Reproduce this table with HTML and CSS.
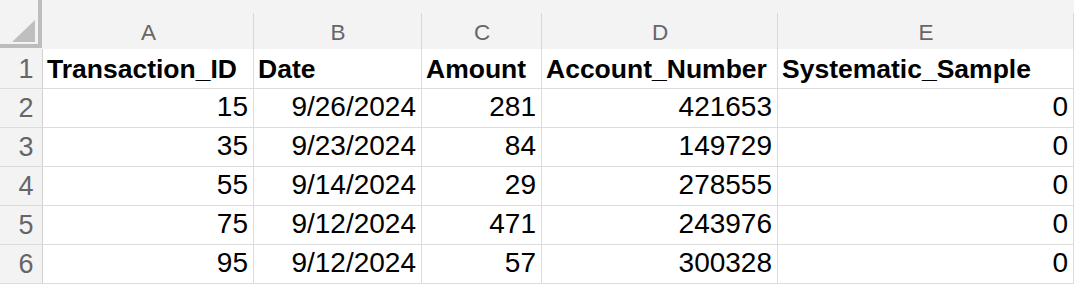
FILE: index.html
```html
<!DOCTYPE html>
<html>
<head>
<meta charset="utf-8">
<link rel="stylesheet" href="styles.css">
</head>
<body>
<div class="sheet">
  <div class="corner">
    <svg width="43" height="49" viewBox="0 0 43 49">
      <polygon points="12,42 35,42 35,20" fill="#bfbfbf"/>
      <rect x="38" y="0" width="4" height="48" fill="#bdbdbd"/>
      <rect x="0" y="44" width="42" height="4" fill="#bdbdbd"/>
    </svg>
  </div>
  <div class="colhead">A</div>
  <div class="colhead">B</div>
  <div class="colhead">C</div>
  <div class="colhead">D</div>
  <div class="colhead">E</div>

  <div class="rowhead">1</div>
  <div class="cell hdr">Transaction_ID</div>
  <div class="cell hdr">Date</div>
  <div class="cell hdr">Amount</div>
  <div class="cell hdr">Account_Number</div>
  <div class="cell hdr">Systematic_Sample</div>

  <div class="rowhead">2</div>
  <div class="cell num">15</div>
  <div class="cell num">9/26/2024</div>
  <div class="cell num">281</div>
  <div class="cell num">421653</div>
  <div class="cell num">0</div>

  <div class="rowhead">3</div>
  <div class="cell num">35</div>
  <div class="cell num">9/23/2024</div>
  <div class="cell num">84</div>
  <div class="cell num">149729</div>
  <div class="cell num">0</div>

  <div class="rowhead">4</div>
  <div class="cell num">55</div>
  <div class="cell num">9/14/2024</div>
  <div class="cell num">29</div>
  <div class="cell num">278555</div>
  <div class="cell num">0</div>

  <div class="rowhead">5</div>
  <div class="cell num">75</div>
  <div class="cell num">9/12/2024</div>
  <div class="cell num">471</div>
  <div class="cell num">243976</div>
  <div class="cell num">0</div>

  <div class="rowhead">6</div>
  <div class="cell num">95</div>
  <div class="cell num">9/12/2024</div>
  <div class="cell num">57</div>
  <div class="cell num">300328</div>
  <div class="cell num">0</div>
</div>
</body>
</html>
```
FILE: styles.css
```css
* { box-sizing: border-box; }
html, body {
  margin: 0;
  padding: 0;
  background: #ffffff;
  font-family: "Liberation Sans", Arial, sans-serif;
}
.sheet {
  display: grid;
  grid-template-columns: 43px 211px 168px 120px 236px 296px;
  grid-template-rows: 49px 40px repeat(5, 39px);
}
.corner {
  background: #f3f3f3;
  display: flex;
}
.corner svg { display: block; }
.colhead {
  background:
    linear-gradient(#d8d8d8, #d8d8d8) right bottom / 1px 36px no-repeat,
    #f3f3f3;
  color: #666666;
  font-size: 22.5px;
  line-height: 26px;
  display: flex;
  align-items: flex-end;
  justify-content: center;
  padding-bottom: 3px;
}
.rowhead {
  background: #f3f3f3;
  color: #666666;
  font-size: 27px;
  line-height: 30px;
  display: flex;
  align-items: flex-end;
  justify-content: center;
  padding: 0 0 4px 10px;
  border-right: 1px solid #d2d2d2;
  border-bottom: 1px solid #dcdcdc;
}
.cell {
  color: #000000;
  font-size: 28px;
  line-height: 30px;
  display: flex;
  align-items: flex-end;
  padding: 0 5px 5px 4px;
  border-right: 1px solid #dcdcdc;
  border-bottom: 1px solid #dcdcdc;
  white-space: nowrap;
  overflow: hidden;
}
.num { justify-content: flex-end; }
.hdr {
  font-weight: bold;
  font-size: 26.5px;
  padding-bottom: 4px;
}
```
